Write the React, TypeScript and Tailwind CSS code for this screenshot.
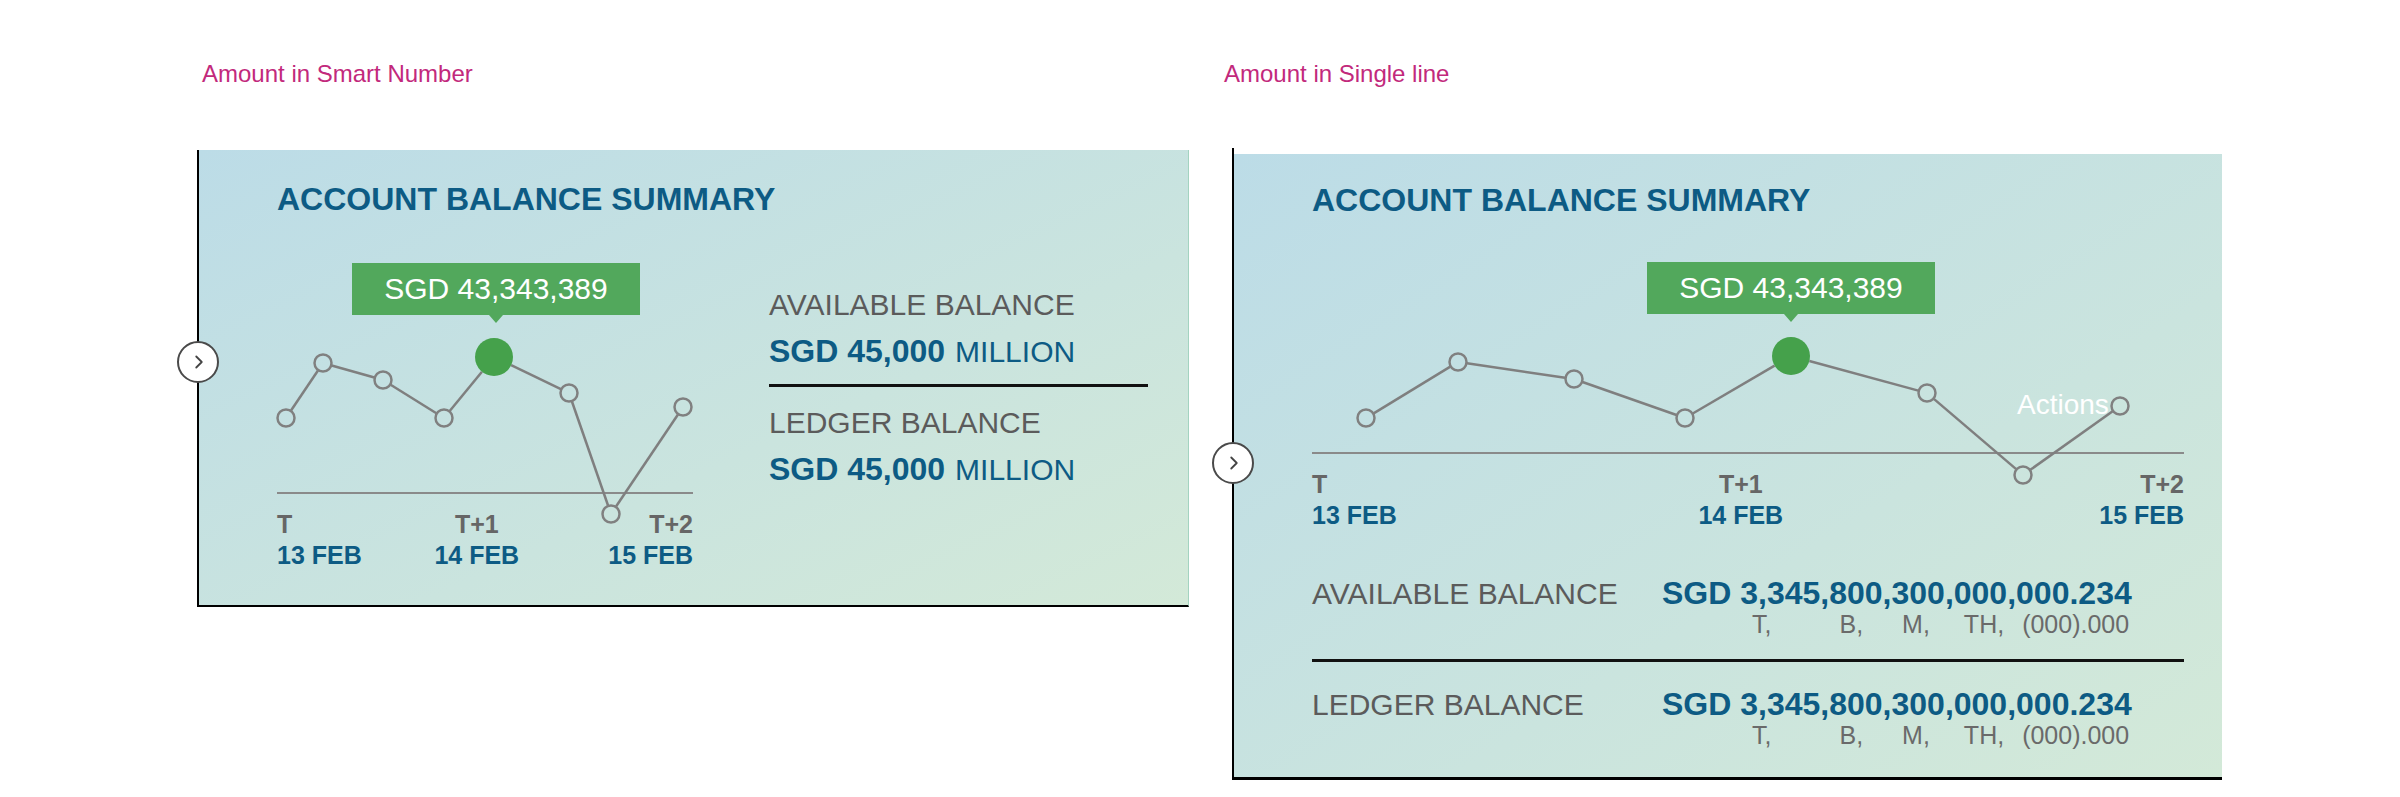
import React from "react";
import { ChevronRight } from "lucide-react";

type Pt = { x: number; y: number };

const BLUE = "text-[#0d5b84]";

// trims a segment so it stops at the rim of the circles on both ends
const trim = (a: Pt, b: Pt, ra: number, rb: number) => {
  const dx = b.x - a.x;
  const dy = b.y - a.y;
  const len = Math.hypot(dx, dy);
  return {
    x1: a.x + (dx / len) * ra,
    y1: a.y + (dy / len) * ra,
    x2: b.x - (dx / len) * rb,
    y2: b.y - (dy / len) * rb,
  };
};

const LineChart: React.FC<{ points: Pt[]; active: number; baseline: number; width: number }> = ({
  points,
  active,
  baseline,
  width,
}) => {
  const r = (i: number) => (i === active ? 19 : 9);
  return (
    <svg className="absolute left-0 top-0 overflow-visible" width={width} height={baseline + 2}>
      <line x1={0} y1={baseline} x2={width} y2={baseline} stroke="#8a8a8a" strokeWidth={2} />
      {points.slice(1).map((p, i) => {
        const s = trim(points[i], p, r(i), r(i + 1));
        return <line key={i} {...s} stroke="#7f7f7f" strokeWidth={2.5} />;
      })}
      {points.map((p, i) =>
        i === active ? (
          <circle key={i} cx={p.x} cy={p.y} r={19} fill="#45a14b" />
        ) : (
          <circle key={i} cx={p.x} cy={p.y} r={8.5} fill="none" stroke="#808080" strokeWidth={2.5} />
        )
      )}
    </svg>
  );
};

const Tooltip: React.FC<{ left: number }> = ({ left }) => (
  <div className="absolute top-0 h-[52px] w-[288px]" style={{ left }}>
    <div className="flex h-full w-full items-center justify-center bg-[#52a85c] text-[30px] font-light leading-none text-white">
      SGD 43,343,389
    </div>
    <div className="mx-auto h-0 w-0 border-x-[7px] border-t-[8px] border-x-transparent border-t-[#52a85c]" />
  </div>
);

const Chevron: React.FC<{ top: string }> = ({ top }) => (
  <div
    className={`absolute -left-[22px] ${top} flex h-[42px] w-[42px] items-center justify-center rounded-full border-2 border-[#4a4a4a] bg-white`}
  >
    <ChevronRight size={22} strokeWidth={2} color="#444" className="ml-[2px]" />
  </div>
);

const DateLabels: React.FC<{ midOffset: string }> = ({ midOffset }) => (
  <div className="flex text-[25px] font-bold leading-[31px]">
    <div className="flex flex-col items-start">
      <span className="text-[#666]">T</span>
      <span className={BLUE}>13 FEB</span>
    </div>
    <div className={`flex w-[100px] flex-col items-center ${midOffset}`}>
      <span className="text-[#666]">T+1</span>
      <span className={BLUE}>14 FEB</span>
    </div>
    <div className="ml-auto flex flex-col items-end">
      <span className="text-[#666]">T+2</span>
      <span className={BLUE}>15 FEB</span>
    </div>
  </div>
);

const SmartAmount: React.FC<{ className?: string }> = ({ className }) => (
  <div className={`leading-none ${BLUE} ${className ?? ""}`}>
    <span className="text-[32px] font-bold">SGD 45,000</span>
    <span className="ml-[10px] text-[30px] font-light">MILLION</span>
  </div>
);

const LongAmountRow: React.FC<{ label: string; className?: string }> = ({ label, className }) => (
  <div className={`flex items-baseline ${className ?? ""}`}>
    <div className="w-[350px] text-[30px] font-light leading-none text-[#5b5b5b]">{label}</div>
    <div className="flex flex-col items-start">
      <div className={`text-[32px] font-bold leading-none ${BLUE}`}>SGD 3,345,800,300,000,000.234</div>
      <div className="mt-[3px] flex text-[25px] font-light leading-none text-[#6a6a6a]">
        <span className="ml-[90px]">T,</span>
        <span className="ml-[68px]">B,</span>
        <span className="ml-[39px]">M,</span>
        <span className="ml-[34px]">TH,</span>
        <span className="ml-[18px]">(000).000</span>
      </div>
    </div>
  </div>
);

const leftPoints: Pt[] = [
  { x: 9, y: 155 },
  { x: 46, y: 100 },
  { x: 106, y: 117 },
  { x: 167, y: 155 },
  { x: 217, y: 94 },
  { x: 292, y: 130 },
  { x: 334, y: 251 },
  { x: 406, y: 144 },
];

const rightPoints: Pt[] = [
  { x: 54, y: 156 },
  { x: 146, y: 100 },
  { x: 262, y: 117 },
  { x: 373, y: 156 },
  { x: 479, y: 94 },
  { x: 615, y: 131 },
  { x: 711, y: 213 },
  { x: 808, y: 144 },
];

const App: React.FC = () => {
  return (
    <div
      className="flex h-[797px] w-[2400px] items-start gap-[43px] overflow-hidden bg-white pl-[197px] pt-[62px]"
      style={{ fontFamily: '"Liberation Sans", Arial, sans-serif' }}
    >
      {/* Smart number */}
      <section className="flex flex-col">
        <p className="ml-[5px] text-[24px] font-light leading-none text-[#c2297c]">Amount in Smart Number</p>
        <div className="relative mt-[64px] h-[457px] w-[992px] border-b-2 border-l-2 border-r border-b-black border-l-black border-r-[#a3d3c0] bg-linear-to-br from-[#bcdce7] to-[#d3e9d8] pl-[78px] pt-[33px]">
          <Chevron top="top-[191px]" />
          <h2 className={`text-[32px] font-bold leading-none ${BLUE}`}>ACCOUNT BALANCE SUMMARY</h2>
          <div className="mt-[48px] flex items-start">
            <div className="flex w-[416px] flex-col">
              <div className="relative h-[240px]">
                <LineChart points={leftPoints} active={4} baseline={230} width={416} />
                <Tooltip left={75} />
              </div>
              <div className="mt-[6px]">
                <DateLabels midOffset="ml-[65px]" />
              </div>
            </div>
            <div className="ml-[76px] mt-[27px] flex w-[379px] flex-col">
              <div className="text-[30px] font-light leading-none text-[#5b5b5b]">AVAILABLE BALANCE</div>
              <SmartAmount className="mt-[15px]" />
              <div className="mt-[17px] h-[3px] bg-[#111]" />
              <div className="mt-[21px] text-[30px] font-light leading-none text-[#5b5b5b]">LEDGER BALANCE</div>
              <SmartAmount className="mt-[15px]" />
            </div>
          </div>
        </div>
      </section>

      {/* Single line */}
      <section className="flex flex-col">
        <p className="-ml-[8px] text-[24px] font-light leading-none text-[#c2297c]">Amount in Single line</p>
        <div className="relative mt-[62px] flex h-[632px] w-[990px] flex-col border-b-[3px] border-l-2 border-black">
          <Chevron top="top-[294px]" />
          <div className="h-[6px] bg-white" />
          <div className="flex-1 bg-linear-to-br from-[#bcdce7] to-[#d3e9d8] pl-[78px] pt-[30px]">
            <h2 className={`text-[32px] font-bold leading-none ${BLUE}`}>ACCOUNT BALANCE SUMMARY</h2>
            <div className="mt-[46px] flex w-[872px] flex-col">
              <div className="relative h-[207px]">
                <LineChart points={rightPoints} active={4} baseline={191} width={872} />
                <Tooltip left={335} />
                <span className="absolute left-[705px] top-[129px] text-[28px] font-light leading-none text-white">
                  Actions
                </span>
              </div>
              <DateLabels midOffset="ml-[294px]" />
            </div>
            <LongAmountRow label="AVAILABLE BALANCE" className="mt-[46px]" />
            <div className="mt-[22px] h-[3px] w-[872px] bg-[#111]" />
            <LongAmountRow label="LEDGER BALANCE" className="mt-[26px]" />
          </div>
        </div>
      </section>
    </div>
  );
};

export default App;
